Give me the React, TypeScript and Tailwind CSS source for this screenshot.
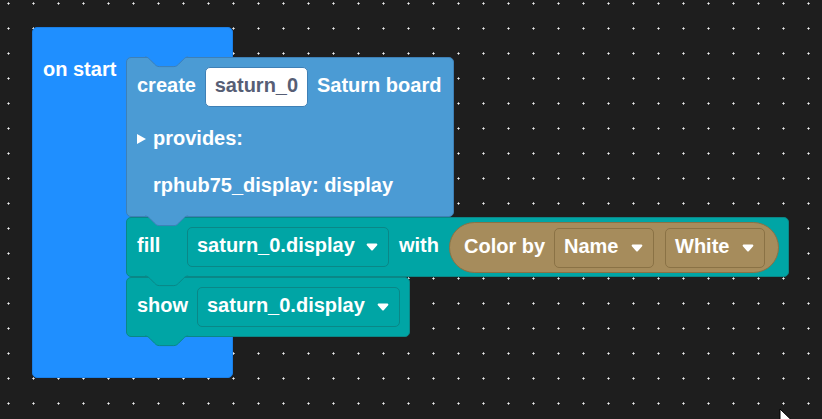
import React from "react";

// Zelos-style connection notch, 36x8 units scaled to 43.2x9.6 px
const NOTCH_OUTLINE = "M0 0 c2 0 3 1 4 2 l4 4 c1 1 2 2 4 2 h12 c2 0 3 -1 4 -2 l4 -4 c1 -1 2 -2 4 -2";

function Tab({ fill, stroke, where }: { fill: string; stroke: string; where: "top" | "bottom" }) {
  const pos = where === "top" ? "top-[-1px]" : "top-full";
  return (
    <svg
      className={`absolute left-[18px] z-10 overflow-visible ${pos}`}
      width={43.2}
      height={9.6}
      viewBox="0 0 36 8"
    >
      <path d={NOTCH_OUTLINE + " Z"} fill={fill} />
      <path d={NOTCH_OUTLINE} fill="none" stroke={stroke} strokeWidth={1} vectorEffect="non-scaling-stroke" />
    </svg>
  );
}

function Label({ children, className = "" }: { children: React.ReactNode; className?: string }) {
  return <span className={`leading-[24px] pb-[4px] whitespace-nowrap text-white ${className}`}>{children}</span>;
}

function Caret() {
  return (
    <svg width="12" height="8" viewBox="0 0 12 8" className="shrink-0">
      <path d="M1.6 0.6 h8.8 a1 1 0 0 1 0.75 1.65 l-4.4 4.9 a1 1 0 0 1 -1.5 0 l-4.4 -4.9 a1 1 0 0 1 0.75 -1.65z" fill="#ffffff" />
    </svg>
  );
}

function Dropdown({ text, width, tone }: { text: string; width: string; tone: "teal" | "tan" }) {
  const colors = tone === "teal" ? "bg-[#00a5a5] border-[#0a8787]" : "bg-[#a68c5c] border-[#8a7245]";
  return (
    <div className={`flex items-center h-[40px] ${width} shrink-0 border rounded-[5px] pl-[9px] pr-[10px] ${colors}`}>
      <Label>{text}</Label>
      <span className="ml-auto">
        <Caret />
      </span>
    </div>
  );
}

function GridDots() {
  return (
    <svg className="absolute inset-0" width="822" height="419">
      <defs>
        <pattern id="dots" x="0" y="0" width="25" height="25" patternUnits="userSpaceOnUse">
          <rect x="7" y="3" width="3" height="1" fill="#a8a8a8" />
          <rect x="8" y="2" width="1" height="3" fill="#a8a8a8" />
          <rect x="8" y="3" width="1" height="1" fill="#f0f0f0" />
        </pattern>
      </defs>
      <rect width="822" height="419" fill="url(#dots)" />
    </svg>
  );
}

function Cursor() {
  return (
    <svg className="absolute left-[779px] top-[408px]" width="14" height="20" viewBox="0 0 14 20">
      <path d="M1 1 L1 16 L4.6 12.6 L7 18 L9.4 17 L7 11.6 L12 11.6 Z" fill="#ffffff" stroke="#000000" strokeWidth="1" strokeLinejoin="round" />
    </svg>
  );
}

export default function App() {
  return (
    <div className="relative w-[822px] h-[419px] overflow-hidden bg-[#1e1e1e] font-['Liberation_Sans',Arial,sans-serif] font-bold text-[20px]">
      <GridDots />

      {/* on start event block, placed on the workspace */}
      <div className="absolute left-[32px] top-[27px] w-[201px] bg-[#1f8fff] border border-[#1a7fe6] rounded-[5px] flex pt-[29px] pb-[40px]">
        <div className="w-[93px] shrink-0 pl-[10px] flex">
          <span className="leading-[24px] text-white whitespace-nowrap">on start</span>
        </div>

        <div className="shrink-0 flex flex-col items-start">
          {/* create saturn_0 Saturn board */}
          <div className="relative w-[328px] h-[160px] bg-[#4b9bd4] border border-[#3e80b6] rounded-[5px] px-[10px] pt-[9px] flex flex-col">
            <Tab where="top" fill="#1f8fff" stroke="#3e80b6" />
            <div className="flex items-center h-[40px] gap-[9px]">
              <Label>create</Label>
              <div className="flex items-center justify-center w-[103px] h-[40px] shrink-0 bg-white border border-[#3e80b6] rounded-[5px]">
                <span className="leading-[24px] pb-[4px] text-[#575e75]">saturn_0</span>
              </div>
              <Label>Saturn board</Label>
            </div>
            <div className="flex items-center h-[40px] mt-[13px]">
              <svg width="9" height="10" viewBox="0 0 9 10" className="mr-[7px] mb-[2px] shrink-0">
                <path d="M0 0 L9 5 L0 10 Z" fill="#ffffff" />
              </svg>
              <Label>provides:</Label>
            </div>
            <div className="flex items-center h-[40px] mt-[7px] pl-[16px]">
              <Label>rphub75_display: display</Label>
            </div>
            <Tab where="bottom" fill="#4b9bd4" stroke="#3e80b6" />
          </div>

          {/* fill <display> with <color> */}
          <div className="relative w-[663px] h-[60px] bg-[#00a5a5] border border-[#0a8787] rounded-[5px] px-[10px] flex items-center">
            <Label className="w-[50px] shrink-0">fill</Label>
            <Dropdown text="saturn_0.display" width="w-[202px]" tone="teal" />
            <Label className="ml-[10px] w-[50px] shrink-0">with</Label>
            <div className="flex items-center h-[51px] w-[330px] shrink-0 bg-[#a68c5c] border border-[#8a7245] rounded-full pl-[14px] gap-[11px] mt-[1px]">
              <Label className="w-[79px] shrink-0">Color by</Label>
              <Dropdown text="Name" width="w-[100px]" tone="tan" />
              <Dropdown text="White" width="w-[100px]" tone="tan" />
            </div>
            <Tab where="bottom" fill="#00a5a5" stroke="#0a8787" />
          </div>

          {/* show <display> */}
          <div className="relative w-[284px] h-[60px] bg-[#00a5a5] border border-[#0a8787] rounded-[5px] px-[10px] flex items-center">
            <Label className="w-[60px] shrink-0">show</Label>
            <Dropdown text="saturn_0.display" width="w-[203px]" tone="teal" />
            <Tab where="bottom" fill="#00a5a5" stroke="#0a8787" />
          </div>
        </div>
      </div>

      <Cursor />
    </div>
  );
}
